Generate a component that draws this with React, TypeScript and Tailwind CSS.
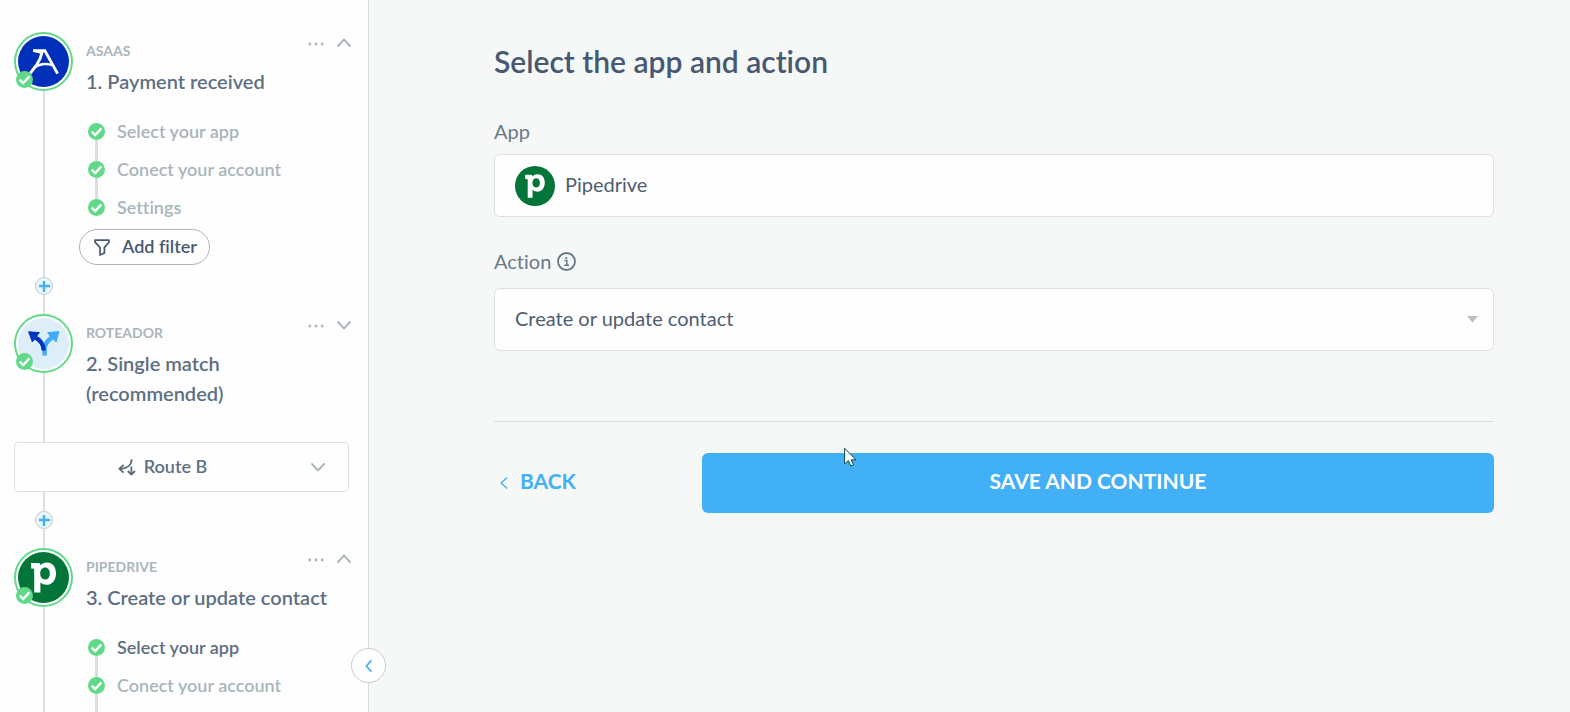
import React from "react";

type Step = { label: string; active?: boolean };

function CheckBadge() {
  return (
    <svg viewBox="0 0 17 17" className="block size-[17px] shrink-0" aria-hidden="true">
      <circle cx="8.5" cy="8.5" r="8.5" fill="#60d989" />
      <path d="M3.7 8.7 L7.2 12 L13.4 5.4" fill="none" stroke="#fff" strokeWidth="2.4" />
    </svg>
  );
}

function Chevron({ up = false }: { up?: boolean }) {
  return (
    <svg viewBox="0 0 16 16" className="block size-4" aria-hidden="true">
      <path
        d={up ? "M2 11 L8 4.6 L14 11" : "M2 5 L8 11.4 L14 5"}
        fill="none"
        stroke="#a9b5bb"
        strokeWidth="1.9"
        strokeLinecap="round"
      />
    </svg>
  );
}

function Dots() {
  return (
    <svg viewBox="0 0 16 4" className="block h-1 w-4" aria-hidden="true">
      <g fill="#a9b5bb">
        <circle cx="1.8" cy="2" r="1.4" />
        <circle cx="8" cy="2" r="1.4" />
        <circle cx="14.2" cy="2" r="1.4" />
      </g>
    </svg>
  );
}

function PipedriveLogo({ className }: { className: string }) {
  return (
    <svg viewBox="0 0 51 51" className={className} aria-hidden="true">
      <circle cx="25.5" cy="25.5" r="25.5" fill="#037538" />
      <path
        fill="#fff"
        fillRule="evenodd"
        d="M13 11 H21 Q22 11 22.4 13 Q24.6 10.4 28.8 10.4 C34.4 10.4 38 14.8 38 21.4 C38 28 34 32.8 28.6 32.8 Q24.6 32.8 22.4 30.4 V40.6 H16.2 V18 Q16.2 16.6 14.6 16.6 H13 Z M27.2 15.6 C24.2 15.6 22.2 18 22.2 21.6 C22.2 25.2 24.4 27.4 27 27.4 C29.8 27.4 31.8 25.4 31.8 21.4 C31.8 17.8 29.8 15.6 27.2 15.6 Z"
      />
    </svg>
  );
}

function AsaasLogo() {
  return (
    <svg viewBox="0 0 51 51" className="block size-[51px]" aria-hidden="true">
      <circle cx="25.5" cy="25.5" r="25.5" fill="#0030b9" />
      <g fill="none" stroke="#fff" strokeWidth="2.9">
        <path d="M15 14.6 H26.8 L39.6 37.6" strokeLinejoin="miter" />
        <path d="M16.6 15.4 Q20.6 15.6 23 17" strokeWidth="2" />
        <path d="M24.4 15.2 Q22.8 22.6 18.8 28.6 L12.2 37.4" />
        <path d="M16 32 Q24.5 25.6 35.6 29.6" strokeWidth="2.6" />
      </g>
    </svg>
  );
}

function RouterLogo() {
  return (
    <svg viewBox="0 0 51 51" className="block size-[51px]" aria-hidden="true">
      <circle cx="25.5" cy="25.5" r="25.5" fill="#deeef8" />
      <path d="M26.6 37.5 V31 Q26.8 24.6 34 19.4" fill="none" stroke="#42a9fb" strokeWidth="4.4" />
      <path d="M29.6 14.6 L40.8 13.6 L38.2 24 L35.2 20.8 L33 19.4 Z" fill="#42a9fb" stroke="#42a9fb" strokeLinejoin="round" />
      <path d="M16.4 19 Q25.8 23.6 25.6 32.6" fill="none" stroke="#0035c0" strokeWidth="4.2" />
      <path d="M10.6 13.8 L21.4 14.6 L18.4 18.4 L14.4 24 Z" fill="#0035c0" stroke="#0035c0" strokeLinejoin="round" />
    </svg>
  );
}

function Line({ className = "" }: { className?: string }) {
  return <div className={`w-0.5 bg-[#dbe0e4] ${className}`} />;
}

function AddStep() {
  return (
    <button
      type="button"
      aria-label="Add step"
      className="flex size-[18px] items-center justify-center rounded-full border border-[#c3cbcf] bg-[#e9f6fd]"
    >
      <svg viewBox="0 0 11 11" className="block size-[11px]" aria-hidden="true">
        <path d="M5 0 V11 M0 5 H11" stroke="#42b0f7" strokeWidth="2.4" />
      </svg>
    </button>
  );
}

function Connector() {
  return (
    <div className="flex w-[60px] flex-col items-center">
      <AddStep />
      <Line className="h-[19px]" />
    </div>
  );
}

function FlowNode({
  app,
  title,
  logo,
  expanded = false,
  className = "",
  children,
}: {
  app: string;
  title: string;
  logo: React.ReactNode;
  expanded?: boolean;
  className?: string;
  children?: React.ReactNode;
}) {
  return (
    <section className={`flex shrink-0 ${className}`}>
      <div className="flex w-[60px] shrink-0 flex-col items-center">
        <div className="relative flex size-[59px] shrink-0 items-center justify-center self-start rounded-full border-2 border-[#60d989] bg-white">
          {logo}
          <span className="absolute bottom-px left-0">
            <CheckBadge />
          </span>
        </div>
        <Line className="flex-1" />
      </div>
      <div className="min-w-0 flex-1 pl-[5px]">
        <div className="flex h-[30px] justify-between pl-[7px]">
          <span className="self-end text-sm leading-[22px] font-bold text-[#a9b5bb]">{app}</span>
          <div className="-mr-[3px] flex h-6 items-center gap-3">
            <button type="button" aria-label={`${app} options`}>
              <Dots />
            </button>
            <button type="button" aria-label={`${app} details`} aria-expanded={expanded} className="pb-0.5">
              <Chevron up={expanded} />
            </button>
          </div>
        </div>
        <h2 className="mt-1 pr-3 pl-[7px] text-xl leading-[30px] font-semibold text-[#5d6f83]">{title}</h2>
        {children}
      </div>
    </section>
  );
}

function Steps({ items, continues = false }: { items: Step[]; continues?: boolean }) {
  return (
    <ul className="mt-[27px] pl-[9px]">
      {items.map((s, i) => (
        <li key={s.label} className="flex gap-3">
          <div className="flex flex-col items-center">
            <CheckBadge />
            {(i < items.length - 1 || continues) && <div className="h-[21px] w-[3px] bg-[#d8dde1]" />}
          </div>
          <a
            href="#step"
            className={`h-[17px] text-lg leading-[17px] font-semibold ${s.active ? "text-[#5d6f83]" : "text-[#a9b5bb]"}`}
          >
            {s.label}
          </a>
        </li>
      ))}
    </ul>
  );
}

function Sidebar() {
  return (
    <aside className="relative w-[369px] shrink-0 border-r border-[#d8dde0] bg-[#fefefe]">
      <div className="flex h-full flex-col overflow-hidden pt-8 pr-[19px] pl-3.5">
        <FlowNode app="ASAAS" title="1. Payment received" logo={<AsaasLogo />} expanded>
          <Steps items={[{ label: "Select your app" }, { label: "Conect your account" }, { label: "Settings" }]} />
          <button
            type="button"
            className="mt-[13px] mb-3 flex h-9 w-[131px] items-center gap-3 rounded-full border border-[#a9b5bb] pl-3.5 text-lg leading-5 font-semibold text-[#475872]"
          >
            <svg viewBox="0 0 16 17" className="block h-[17px] w-4 shrink-0" aria-hidden="true">
              <path
                d="M1 1.2 H15 V3.2 L10.4 8.4 V14 L6 16 V8.4 L1 3.2 Z"
                fill="none"
                stroke="#475872"
                strokeWidth="1.7"
                strokeLinejoin="round"
              />
            </svg>
            <span className="pb-0.5">Add filter</span>
          </button>
        </FlowNode>
        <Connector />

        <FlowNode app="ROTEADOR" title="2. Single match (recommended)" logo={<RouterLogo />} className="min-h-32" />

        <button
          type="button"
          className="flex h-[50px] shrink-0 items-center rounded border border-[#dbe0e2] bg-[#fefefe] pr-[22px] text-lg leading-5 font-semibold text-[#5d6f83]"
        >
          <span className="flex flex-1 items-center justify-center gap-2">
            <svg
              viewBox="0 0 18 18"
              className="block size-[18px]"
              fill="none"
              stroke="#5d6876"
              strokeWidth="1.8"
              aria-hidden="true"
            >
              <path d="M13.6 1.2 C13.4 6.6 11 10.2 1.8 10.8" />
              <path d="M5.6 6.8 L1.4 10.8 L5.6 14.6" />
              <path d="M13.4 8.6 V16.4" />
              <path d="M9.8 13 L13.4 16.6 L17 13" />
            </svg>
            <span className="pb-0.5">Route B</span>
          </span>
          <Chevron />
        </button>
        <div className="flex w-[60px] justify-center">
          <Line className="h-[19px]" />
        </div>
        <Connector />

        <FlowNode app="PIPEDRIVE" title="3. Create or update contact" logo={<PipedriveLogo className="block size-[51px]" />} expanded>
          <Steps items={[{ label: "Select your app", active: true }, { label: "Conect your account" }]} continues />
        </FlowNode>
      </div>
      <button
        type="button"
        aria-label="Collapse sidebar"
        className="absolute -right-[18px] bottom-[29px] flex size-[35px] items-center justify-center rounded-full border border-[#c6cdd0] bg-[#fefefe]"
      >
        <svg viewBox="0 0 8 14" className="block h-3.5 w-2" aria-hidden="true">
          <path d="M6.4 1.4 L1.4 7 L6.4 12.6" fill="none" stroke="#42b0f7" strokeWidth="1.7" />
        </svg>
      </button>
    </aside>
  );
}

export default function App() {
  return (
    <div className="relative flex h-screen overflow-hidden bg-[#f6f8f8] font-['Lato',sans-serif] [font-variant-ligatures:none]">
      <Sidebar />
      <main className="min-w-0 flex-1 pt-[41px] pr-[76px] pl-[125px]">
        <h1 className="text-3xl leading-10 font-semibold text-[#475872]">Select the app and action</h1>

        <label htmlFor="app" className="mt-[38px] block text-xl leading-6 text-[#6b7889]">
          App
        </label>
        <div className="mt-[11px] flex h-[63px] items-center gap-2.5 rounded-md border border-[#dce0e1] bg-[#fefefe] px-5">
          <PipedriveLogo className="block size-10 shrink-0" />
          <input
            id="app"
            readOnly
            value="Pipedrive"
            className="min-w-0 flex-1 bg-transparent pb-1 text-xl text-[#4f5d70] outline-none"
          />
        </div>

        <div className="mt-8 flex items-center gap-1.5 leading-6">
          <label htmlFor="action" className="text-xl leading-6 text-[#6b7889]">
            Action
          </label>
          <svg viewBox="0 0 19 19" className="block size-[19px]" aria-hidden="true">
            <circle cx="9.5" cy="9.5" r="8.5" fill="none" stroke="#66758a" strokeWidth="1.8" />
            <circle cx="9.3" cy="6" r="1.1" fill="#66758a" />
            <path d="M7.6 8.6 H9.8 V13.2 M7.2 13.2 H12" fill="none" stroke="#66758a" strokeWidth="1.5" />
          </svg>
        </div>
        <div className="relative mt-[15px]">
          <select
            id="action"
            className="block h-[63px] w-full appearance-none rounded-md border border-[#dce0e1] bg-[#fefefe] px-5 pb-1 text-xl text-[#4f5d70]"
          >
            <option>Create or update contact</option>
          </select>
          <svg
            viewBox="0 0 11 7"
            className="pointer-events-none absolute top-7 right-4 block h-[7px] w-[11px]"
            aria-hidden="true"
          >
            <path d="M0 0 H11 L5.5 6.6 Z" fill="#b9bfc1" />
          </svg>
        </div>

        <hr className="mt-[70px] border-[#dce0e1]" />

        <div className="mt-[31px] flex h-[60px]">
          <div className="flex w-52 shrink-0">
            <button type="button" className="flex items-center gap-3 px-1.5 pb-1 text-[21px] leading-6 font-bold text-[#42b0f7]">
              <svg viewBox="0 0 8 14" className="mt-1 block h-3.5 w-2" aria-hidden="true">
                <path d="M7 1.4 L1.2 7 L7 12.6" fill="none" stroke="#42b0f7" strokeWidth="1.4" />
              </svg>
              BACK
            </button>
          </div>
          <button
            type="button"
            className="min-w-0 flex-1 rounded-md bg-[#42b0f7] pb-1 text-[21px] leading-6 font-bold text-white"
          >
            SAVE AND CONTINUE
          </button>
        </div>
      </main>

      <svg
        viewBox="0 0 13 20"
        className="pointer-events-none absolute top-[447px] left-[844px] block h-5 w-[13px]"
        aria-hidden="true"
      >
        <path
          d="M0.6 1.2 V17 L4.4 13.6 L6.8 19 L9.4 17.8 L7.2 12.8 H12 Z"
          fill="#fff"
          stroke="#0d4d3c"
          strokeWidth="1"
          strokeLinejoin="round"
        />
      </svg>
    </div>
  );
}
